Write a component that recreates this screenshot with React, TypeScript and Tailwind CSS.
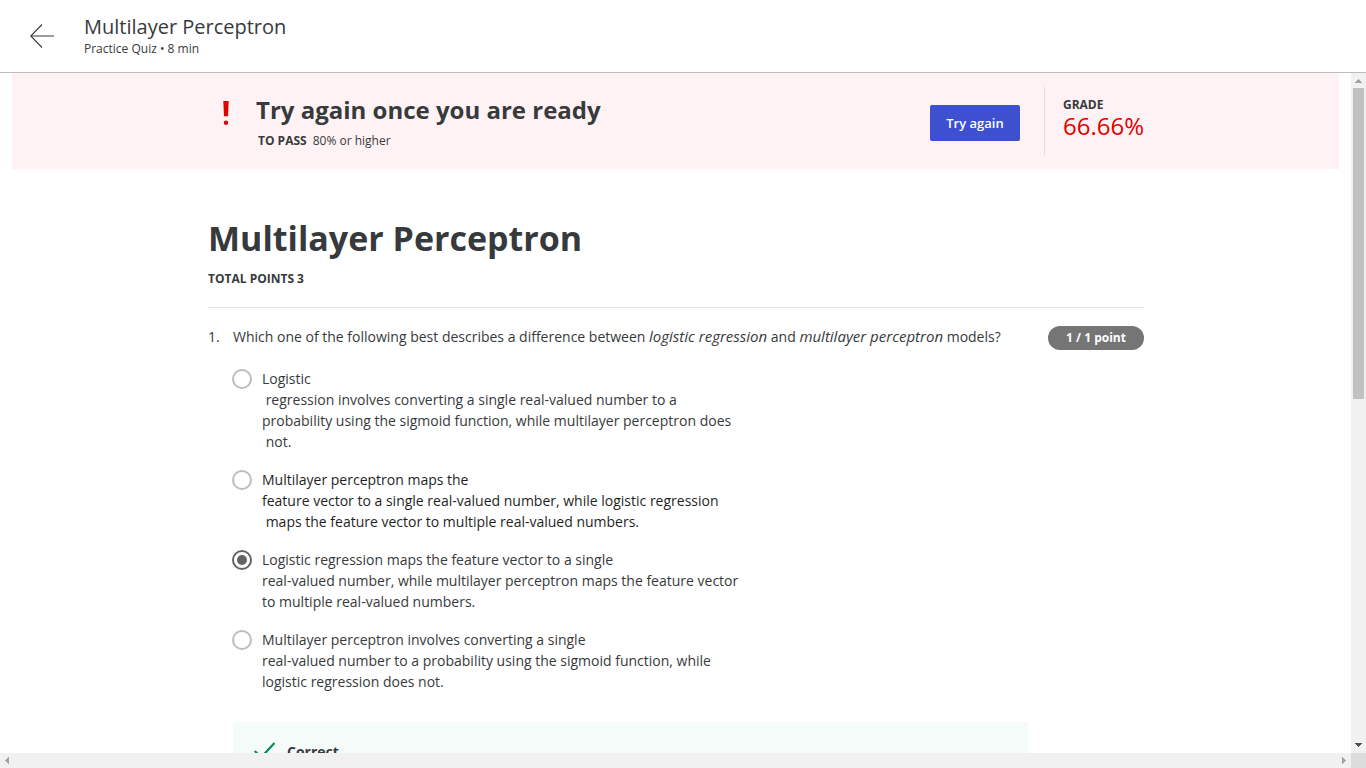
import { useState } from "react";

type Option = { text: string; dark?: boolean };

const options: Option[] = [
  {
    text: "Logistic\n regression involves converting a single real-valued number to a\nprobability using the sigmoid function, while multilayer perceptron does\n not.",
  },
  {
    text: "Multilayer perceptron maps the\nfeature vector to a single real-valued number, while logistic regression\n maps the feature vector to multiple real-valued numbers.",
    dark: true,
  },
  {
    text: "Logistic regression maps the feature vector to a single\nreal-valued number, while multilayer perceptron maps the feature vector\nto multiple real-valued numbers.",
  },
  {
    text: "Multilayer perceptron involves converting a single\nreal-valued number to a probability using the sigmoid function, while\nlogistic regression does not.",
  },
];

function Header() {
  return (
    <header className="flex h-[73px] shrink-0 items-center border-b border-[#bdbdbd] bg-white pl-[30px]">
      <button type="button" aria-label="Back" className="mr-[30px] size-6">
        <svg viewBox="0 0 24 24" className="size-6" fill="none" stroke="#373a3c">
          <path d="M12 0.5L0.8 12L12 23.5" strokeWidth="1.1" />
          <path d="M1 12H24" strokeWidth="1" />
        </svg>
      </button>
      <div className="pt-0.5">
        <h2 className="text-[20px] leading-6">Multilayer Perceptron</h2>
        <p className="text-[12px] leading-5">Practice Quiz • 8 min</p>
      </div>
    </header>
  );
}

function Banner() {
  return (
    <section className="mx-3 bg-[#fff2f4]">
      <div className="mx-auto flex h-24 max-w-[937px] items-center pl-px">
        <svg viewBox="0 0 6 24" className="mt-7 mr-[27px] ml-[15px] h-6 w-[6px] self-start" fill="#e10000">
          <path d="M0.3 0H5.7L5 15.3H1Z" />
          <circle cx="3" cy="21.7" r="2.2" />
        </svg>
        <div className="grow">
          <h2 className="text-[24px] leading-9 font-bold">Try again once you are ready</h2>
          <p className="pt-1 pl-0.5 text-[12px] leading-[18px]">
            <strong className="mr-1.5">TO PASS</strong>80% or higher
          </p>
        </div>
        <button
          type="button"
          className="mt-1 mr-6 h-9 w-[90px] rounded-xs bg-[#3d50cf] pt-px text-[13px] font-semibold text-white"
        >
          Try again
        </button>
        <div className="flex h-[68px] flex-col border-l border-[#e1dcdf] pt-[9px] pl-[18px]">
          <span className="text-[12px] leading-[18px] font-bold">GRADE</span>
          <span className="text-[24px] leading-6 text-[#e10000]">66.66%</span>
        </div>
      </div>
    </section>
  );
}

function Question() {
  const [selected, setSelected] = useState(2);
  return (
    <section className="pt-[18px]">
      <div className="flex items-start text-[14px] leading-[21px]">
        <span className="w-[25px] shrink-0">1.</span>
        <p id="question" className="grow">
          Which one of the following best describes a difference between{" "}
          <em className="text-[15px]">logistic regression</em> and{" "}
          <em className="text-[15px]">multilayer perceptron</em> models?
        </p>
        <span className="w-24 shrink-0 rounded-full bg-[#757575] text-center text-[12px] leading-6 font-bold text-white">
          1 / 1 point
        </span>
      </div>
      <div role="radiogroup" aria-labelledby="question" className="flex flex-col gap-[17px] pt-[18px] pl-6">
        {options.map((option, i) => (
          <label key={i} className="flex items-start gap-2.5 text-[14px] leading-[21px]">
            <input
              type="radio"
              name="answer"
              checked={selected === i}
              onChange={() => setSelected(i)}
              className="mt-px size-5 shrink-0 appearance-none rounded-full border-2 border-[#bdbdbd] bg-clip-content p-[3px] checked:border-[#636363] checked:bg-[#636363]"
            />
            <span className={option.dark ? "whitespace-pre-wrap text-[#1f1f1f]" : "whitespace-pre-wrap"}>
              {option.text}
            </span>
          </label>
        ))}
      </div>
      <div className="mt-[30px] mr-[116px] ml-[25px] flex items-center gap-3 bg-[#f5fbf9] px-5 py-[19px]">
        <svg viewBox="0 0 22 20" className="h-5 w-[22px]" fill="none" stroke="#008b58" strokeWidth="2.2">
          <path d="M1.8 9L8 15.5L21.5 1" />
        </svg>
        <strong className="text-[14px] leading-[21px]">Correct</strong>
      </div>
    </section>
  );
}

function VerticalScrollbar() {
  return (
    <div aria-hidden="true" className="flex w-[15px] shrink-0 flex-col items-center bg-[#f1f1f1]">
      <svg viewBox="0 0 15 15" className="size-[15px] shrink-0" fill="#a3a3a3" shapeRendering="crispEdges">
        <path d="M4 10L7.5 6L11 10Z" />
      </svg>
      <div className="h-[311px] w-[11px] shrink-0 bg-[#c1c1c1]" />
      <div className="grow" />
      <svg viewBox="0 0 15 15" className="size-[15px] shrink-0" fill="#505050" shapeRendering="crispEdges">
        <path d="M4 5L7.5 9L11 5Z" />
      </svg>
    </div>
  );
}

function HorizontalScrollbar() {
  return (
    <div aria-hidden="true" className="flex h-[15px] shrink-0 justify-between bg-[#f1f1f1]">
      <svg viewBox="0 0 15 15" className="size-[15px]" fill="#a3a3a3" shapeRendering="crispEdges">
        <path d="M9 4L5 7.5L9 11Z" />
      </svg>
      <div className="flex">
        <svg viewBox="0 0 15 15" className="size-[15px]" fill="#a3a3a3" shapeRendering="crispEdges">
          <path d="M6 4L10 7.5L6 11Z" />
        </svg>
        <div className="size-[15px] bg-[#dcdcdc]" />
      </div>
    </div>
  );
}

export default function App() {
  return (
    <div className="flex h-screen flex-col overflow-hidden bg-white font-['Open_Sans',sans-serif] text-[#373a3c]">
      <Header />
      <div className="flex min-h-0 grow">
        <main className="min-w-0 grow overflow-hidden">
          <Banner />
          <div className="mx-auto max-w-[937px] pl-px">
            <div className="border-b border-[#e1e1e1] pt-11 pb-[19px]">
              <h1 className="text-[34px] leading-[50px] font-bold">Multilayer Perceptron</h1>
              <p className="pt-[7px] text-[12px] leading-[18px] font-bold">TOTAL POINTS 3</p>
            </div>
            <Question />
          </div>
        </main>
        <VerticalScrollbar />
      </div>
      <HorizontalScrollbar />
    </div>
  );
}
